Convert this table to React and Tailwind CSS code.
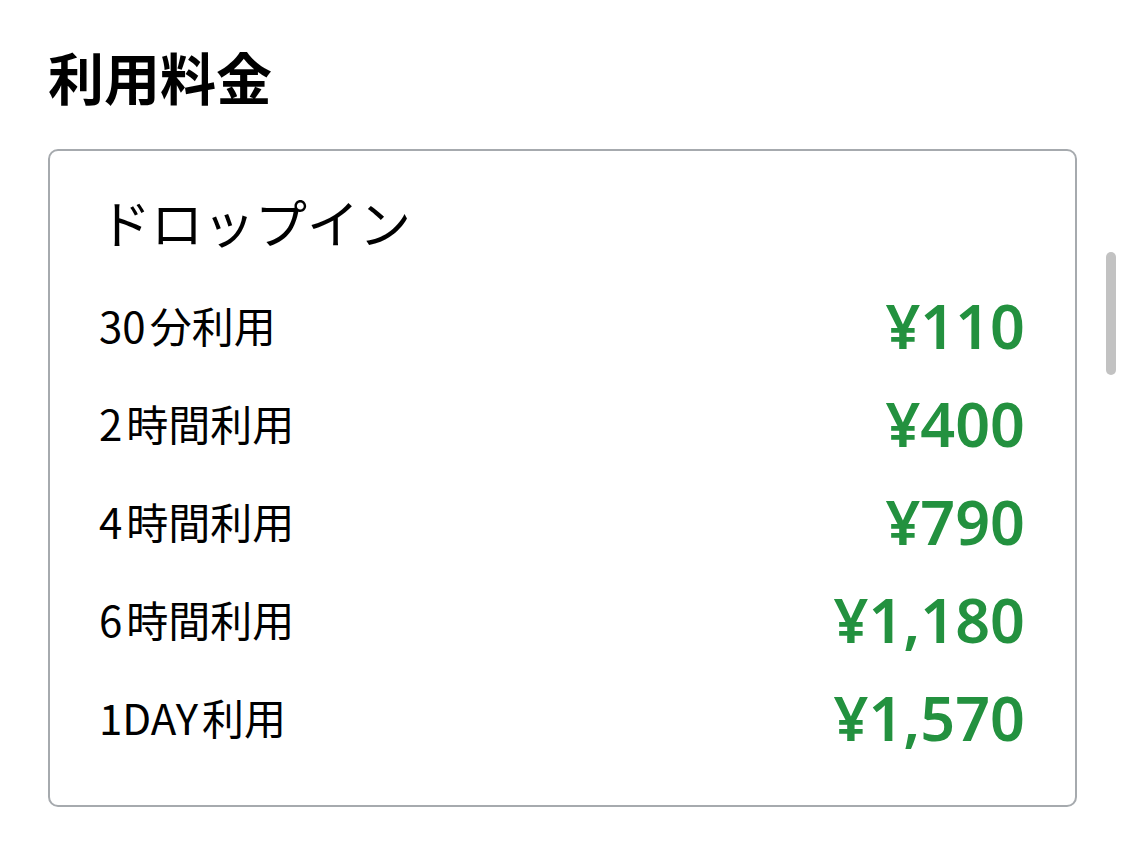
const prices = [
  { label: '30', unit: '分利用', price: '¥110' },
  { label: '2', unit: '時間利用', price: '¥400' },
  { label: '4', unit: '時間利用', price: '¥790' },
  { label: '6', unit: '時間利用', price: '¥1,180' },
  { label: '1DAY', unit: '利用', price: '¥1,570' },
];

export default function App() {
  return (
    <div
      className="relative w-[1125px] h-[867px] bg-white text-black overflow-hidden"
      style={{ fontFamily: '"Noto Sans CJK JP", "Noto Sans", sans-serif' }}
    >
      <div className="px-12 pt-[48px]">
        <h1 className="text-[56px] leading-[55px] font-bold">利用料金</h1>

        <div className="mt-[46px] w-[1029px] rounded-[10px] border-2 border-[#a6aaae] pl-[49px] pr-[50px] pt-[46px] pb-[39px]">
          <h2 className="text-[52px] leading-[50px] font-normal mb-[29px]">ドロップイン</h2>
          {prices.map((p) => (
            <div key={p.price} className="flex h-[98px] items-center justify-between">
              <span className="text-[42px] leading-none">
                {p.label}
                <span className="ml-[4px]">{p.unit}</span>
              </span>
              <span
                className="text-[61px] leading-none font-semibold text-[#23913f]"
                style={{ fontFamily: '"Noto Sans", "Noto Sans CJK JP", sans-serif' }}
              >
                {p.price}
              </span>
            </div>
          ))}
        </div>
      </div>

      <div className="absolute left-[1106px] top-[252px] h-[123px] w-[10px] rounded-full bg-[#c2c2c2]" />
    </div>
  );
}
